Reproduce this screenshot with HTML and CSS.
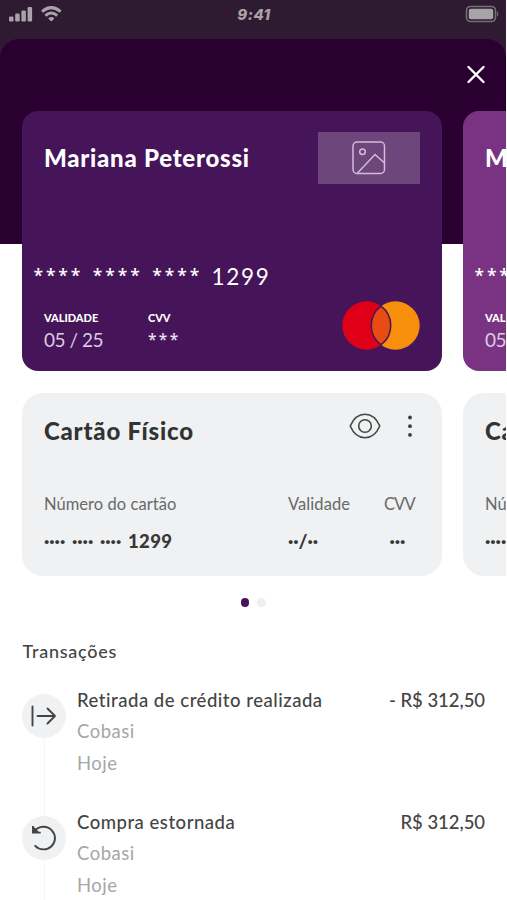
FILE: index.html
```html
<!DOCTYPE html>
<html lang="pt-BR">
<head>
<meta charset="utf-8">
<title>Cartões</title>
<link rel="stylesheet" href="styles.css">
</head>
<body>
<div class="screen">
  <header class="status">
    <svg class="signal" width="56" height="20" viewBox="0 0 56 20">
      <g fill="#aaa2aa"><rect x="0" y="11.500" width="4.500" height="5" rx="1.200"/><rect x="6.200" y="8.500" width="4.500" height="8" rx="1.200"/><rect x="12.400" y="5.500" width="4.500" height="11" rx="1.200"/><rect x="18.600" y="2" width="4.500" height="14.500" rx="1.200"/></g>
      <g fill="none" stroke="#aaa2aa" stroke-width="3"><path d="M33 6.600Q42.300 -1.400 51.600 6.600"/><path d="M36.400 10.600Q42.300 5.400 48.200 10.600"/></g>
      <path d="M39.200 13.400Q42.300 10.800 45.400 13.400L42.300 16.600Z" fill="#aaa2aa"/>
    </svg>
    <span class="time">9:41</span>
    <svg width="34" height="18" viewBox="0 0 34 18"><rect x="1.500" y="1.500" width="29" height="15" rx="4" fill="none" stroke="#766b78" stroke-width="1.600"/><rect x="3.800" y="3.800" width="24.400" height="10.400" rx="2" fill="#a7a4a8"/><path d="M32 6.500v5q1.300-.7 1.300-2.500T32 6.500" fill="#766b78"/></svg>
  </header>
  <main class="sheet">
    <div class="bar">
      <svg width="20" height="20" viewBox="0 0 20 20"><path d="M2.500 2l15 15M17.500 2l-15 15" stroke="#fff" stroke-width="2.400" stroke-linecap="round"/></svg>
    </div>
    <div class="rail">
      <section class="card">
        <div class="card-head"><h2 class="name">Mariana Peterossi</h2>
          <div class="logo"><svg width="34" height="34" viewBox="0 0 34 34" fill="none" stroke="#d4bcd9" stroke-width="1.500"><rect x="1" y="1" width="31.500" height="31.500" rx="4"/><circle cx="10.500" cy="10.700" r="2.800"/><path d="M5.500 32L23 13.500l9.500 8.500"/></svg></div>
        </div>
        <div class="number"><span class="stars">****</span><span class="stars">****</span><span class="stars">****</span><span class="digits">1299</span></div>
        <div class="card-foot">
          <div><div class="tiny">VALIDADE</div><div class="date">05 / 25</div></div>
          <div><div class="tiny">CVV</div><div class="code">***</div></div>
          <svg class="brand" width="78" height="50" viewBox="0 0 78 50"><circle cx="24.500" cy="24.500" r="24.200" fill="#df0017"/><circle cx="53.500" cy="24.500" r="24.200" fill="#f78f0d"/><path d="M39 5.100a24.200 24.200 0 0 1 0 38.800a24.200 24.200 0 0 1 0-38.800Z" fill="#e84c12" stroke="#461458" stroke-width="1.500"/></svg>
        </div>
      </section>
      <section class="card alt">
        <div class="card-head"><h2 class="name">Mariana Peterossi</h2></div>
        <div class="number"><span class="stars">****</span></div>
        <div class="card-foot">
          <div><div class="tiny">VALIDADE</div><div class="date">05 / 25</div></div>
        </div>
      </section>
    </div>
    <div class="rail">
      <section class="panel">
        <div class="panel-head"><h2 class="title">Cartão Físico</h2>
          <svg class="eye" width="32" height="26" viewBox="0 0 32 26" fill="none" stroke="#464646" stroke-width="1.600"><path d="M1.200 13C8 -2.700 24 -2.700 30.800 13C24 28.700 8 28.700 1.200 13Z" stroke-linejoin="round"/><circle cx="16" cy="13" r="6.300"/></svg>
          <svg width="6" height="26" viewBox="0 0 6 26" fill="#3c3c3c"><circle cx="3" cy="4.500" r="1.900"/><circle cx="3" cy="13.200" r="1.900"/><circle cx="3" cy="21.900" r="1.900"/></svg>
        </div>
        <div class="fields">
          <div><div class="label l-num">Número do cartão</div><div class="value"><span class="dots">····</span><span class="dots">····</span><span class="dots">····</span><span class="last">1299</span></div></div>
          <div><div class="label l-val">Validade</div><div class="value">··/··</div></div>
          <div class="cvv"><div class="label l-cvv">CVV</div><div class="value">···</div></div>
        </div>
      </section>
      <section class="panel">
        <div class="panel-head"><h2 class="title">Cartão Físico</h2></div>
        <div class="fields">
          <div><div class="label l-num">Número do cartão</div><div class="value"><span class="dots">····</span></div></div>
        </div>
      </section>
    </div>
    <div class="pager"><i class="dot on"></i><i class="dot"></i></div>
    <h3 class="heading">Transações</h3>
    <ul class="list">
      <li class="item">
        <div class="track first"><div class="badge"><svg width="28" height="24" viewBox="0 0 28 24" fill="none" stroke="#444" stroke-width="1.900" stroke-linecap="round" stroke-linejoin="round"><path d="M2.500 2.500v19M7.500 12H25M17.500 4.500L25 12l-7.500 7.500"/></svg></div></div>
        <div class="info"><div class="what">Retirada de crédito realizada</div><div class="sub">Cobasi</div><div class="sub">Hoje</div></div>
        <div class="amount">- R$ 312,50</div>
      </li>
      <li class="item">
        <div class="track"><div class="badge"><svg width="28" height="28" viewBox="0 0 28 28" fill="none" stroke="#444" stroke-width="1.900"><path d="M3.800 7.500C9 1.500 17 1.300 21.800 6.300C26.300 11.300 25.900 18 21.500 22.300C16.800 26.700 9.500 26.300 5.200 21.800" stroke-linecap="round"/><path d="M3 1.900V8.600H10.700" stroke-linejoin="miter"/><path d="M3 2v6.600h6.500z" fill="#444" stroke="none"/></svg></div></div>
        <div class="info"><div class="what">Compra estornada</div><div class="sub">Cobasi</div><div class="sub">Hoje</div></div>
        <div class="amount">R$ 312,50</div>
      </li>
    </ul>
  </main>
</div>
</body>
</html>
```
FILE: styles.css
```css
* { box-sizing: border-box; }
html, body { margin: 0; height: 900px; overflow: hidden; background: #fff; }
body { font-family: Lato, "Liberation Sans", sans-serif; color: #444; }
h2, h3, ul { margin: 0; padding: 0; }
svg { display: block; flex: none; }
.screen { width: 506px; height: 900px; overflow: hidden; background: linear-gradient(#2f1b31 70px, #fff 0); }
.status { height: 39px; padding: 5px 7px 0 9px; display: grid; grid-template-columns: 1fr auto 1fr; align-items: start; color: #aaa2aa; }
.status svg:last-child { justify-self: end; }
.time { font: italic 800 15px/20px Inter, sans-serif; letter-spacing: .5px; }
.sheet { height: 861px; border-radius: 19px 19px 0 0; background: linear-gradient(#2a0030 205.5px, #fff 0); }
.bar { height: 71.5px; display: flex; justify-content: flex-end; padding: 26px 20px 0; }
.rail { display: flex; gap: 21.500px; padding-left: 22.400px; margin-bottom: 22px; overflow: hidden; }
.card { flex: none; width: 419.500px; height: 260.500px; border-radius: 16px; padding: 21.500px 21.500px 0; background: #461458; color: #fff; white-space: nowrap; }
.alt { background: #7a3382; }
.card-head { display: flex; justify-content: space-between; align-items: center; height: 52px; }
.name { font-size: 24px; line-height: 30px; letter-spacing: .75px; font-weight: 900; }
.logo { width: 102.500px; height: 52px; background: #6d477b; display: grid; place-items: center; }
.number { margin: 76.500px 0 0 -10.500px; height: 30px; line-height: 30px; display: flex; }
.stars { width: 59.400px; font-family: "Open Sans", sans-serif; font-weight: 600; font-size: 17.500px; line-height: 28px; letter-spacing: 2.900px; }
.digits { font-size: 22.500px; line-height: 32px; letter-spacing: 1.700px; }
.card-foot { margin-top: 10px; display: grid; grid-template-columns: 104px 1fr 78px; }
.tiny { margin-top: 10px; font-size: 11px; line-height: 14px; font-weight: 900; }
.date { margin-top: 3px; font-size: 19px; line-height: 24px; letter-spacing: -.45px; color: #dccbe2; }
.code { margin-top: 3px; font: 600 15.500px/22px "Open Sans", sans-serif; letter-spacing: 2.400px; color: #eadff0; }
.panel { flex: none; width: 419.500px; height: 183px; border-radius: 21px; padding: 18px 21.500px 0; background: #eff1f2; white-space: nowrap; }
.panel-head { display: flex; align-items: flex-start; height: 40px; padding: 2px 7px 0 0; }
.title { flex: 1; font-size: 24px; line-height: 36px; letter-spacing: .8px; font-weight: 900; color: #323333; }
.eye { margin-right: 26px; }
.fields { margin-top: 42px; display: grid; grid-template-columns: 244px 96px auto; justify-content: start; }
.label { font-size: 16.500px; line-height: 22px; color: #696969; }
.l-num { letter-spacing: .06px; }
.l-val { letter-spacing: .1px; }
.l-cvv { letter-spacing: -.8px; }
.value { margin-top: 14.500px; line-height: 22px; font-size: 19px; font-weight: 900; color: #383838; display: flex; }
.dots { width: 28px; }
.last { font-size: 18.500px; letter-spacing: .4px; }
.cvv .value { padding-left: 5.500px; }
.pager { display: flex; justify-content: center; gap: 8px; height: 8px; }
.dot { width: 8.500px; height: 8.500px; border-radius: 50%; background: #efefef; }
.on { background: #461458; }
.heading { margin: 33px 0 0 22.500px; font-size: 18px; line-height: 24px; font-weight: 500; letter-spacing: .75px; }
.list { list-style: none; margin: 21.500px 21px 0 22px; font-weight: 500; }
.item { display: flex; height: 122px; font-size: 18.500px; line-height: 31.500px; }
.track { width: 44px; margin-right: 11px; padding-top: 9.500px; background: linear-gradient(90deg, transparent 22px, #f5f6f6 22px, #f5f6f6 23px, transparent 23px); }
.first { background-position: 0 40px; background-repeat: no-repeat; }
.badge { width: 44px; height: 44px; border-radius: 50%; background: #eff1f2; display: grid; place-items: center; }
.info { flex: 1; }
.what { letter-spacing: .52px; }
.amount { letter-spacing: -.05px; }
.sub { color: #a6a6a6; letter-spacing: .5px; font-weight: 400; }
```
